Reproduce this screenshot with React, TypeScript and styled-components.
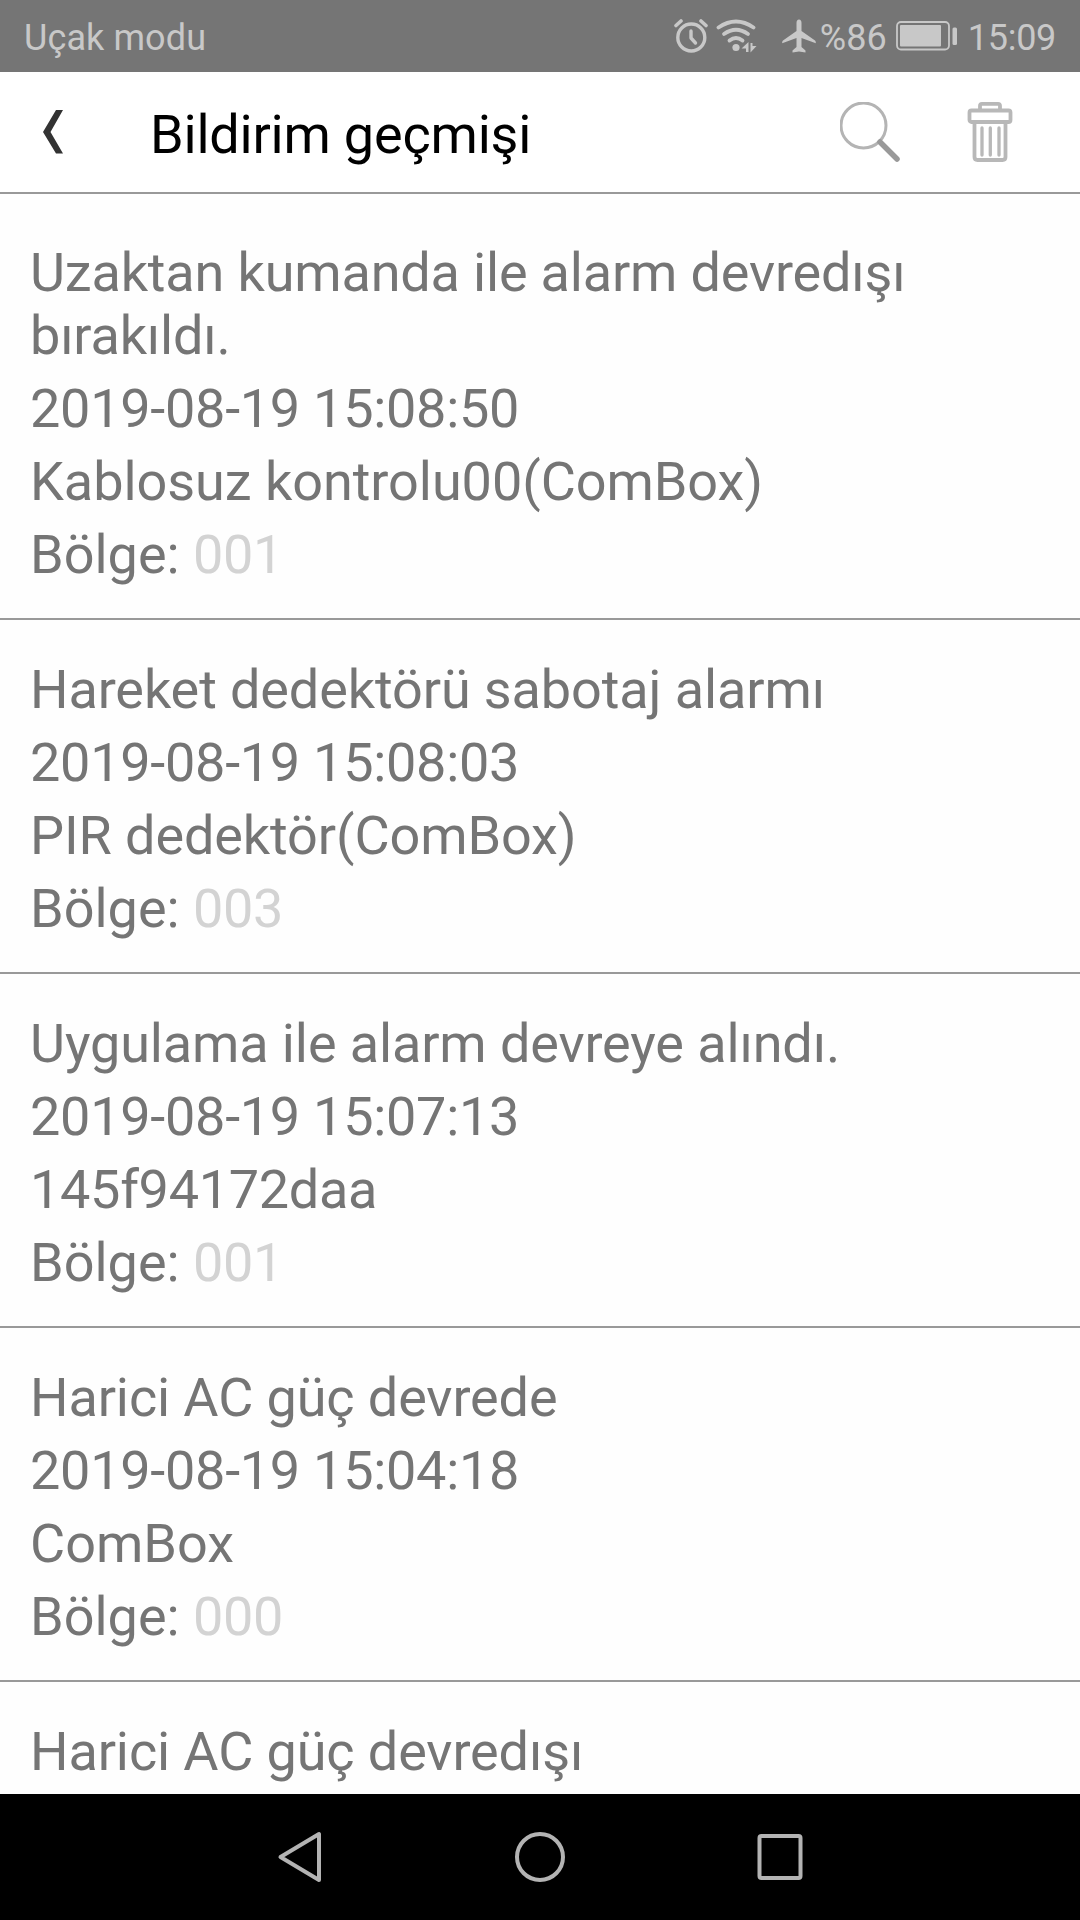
import React from 'react';
import styled, { createGlobalStyle } from 'styled-components';

const GlobalStyle = createGlobalStyle`
  * { box-sizing: border-box; }
  body { margin: 0; background: #fff; font-family: Roboto, "Liberation Sans", sans-serif; }
`;

const Screen = styled.div`
  width: 1080px;
  height: 1920px;
  display: flex;
  flex-direction: column;
  overflow: hidden;
  background: #fefefe;
`;

const StatusBar = styled.div`
  flex: none;
  height: 72px;
  display: flex;
  align-items: center;
  justify-content: space-between;
  padding: 3px 24px 0 24px;
  background: #757575;
  color: #c8c8c8;
  font-size: 36px;
  line-height: 42px;
  white-space: nowrap;
`;

const StatusLabel = styled.span`
  letter-spacing: 0.1px;
`;

const StatusIcons = styled.div`
  display: flex;
  align-items: center;
`;

const StatusGlyph = styled.svg<{ $gap: number }>`
  display: block;
  flex: none;
  margin-right: ${(p) => p.$gap}px;
  margin-top: -3px;
`;

const Percent = styled.span`
  width: 76px;
`;

const Clock = styled.span`
  letter-spacing: -0.3px;
`;

const Header = styled.header`
  flex: none;
  height: 122px;
  display: flex;
  align-items: center;
  padding: 0 67px 0 42px;
  border-bottom: 2px solid #999;
  background: #fff;
`;

const Title = styled.h1`
  flex: 1;
  margin: 5px 0 0 86px;
  font-size: 54px;
  font-weight: 400;
  line-height: 63px;
  letter-spacing: -0.2px;
  color: #000;
`;

const IconButton = styled.button<{ $gap?: number }>`
  display: block;
  padding: 0;
  border: 0;
  background: none;
  margin-right: ${(p) => p.$gap ?? 0}px;
  svg { display: block; }
`;

const List = styled.main`
  flex: 1;
  min-height: 0;
  overflow: hidden;
  padding-top: 9px;
`;

const Item = styled.article`
  display: flex;
  flex-direction: column;
  gap: 10px;
  padding: 38px 30px 32px;
  border-bottom: 2px solid #999;
`;

const Line = styled.div<{ $tracking?: number }>`
  font-size: 54px;
  line-height: 63px;
  letter-spacing: ${(p) => p.$tracking ?? 0}px;
  color: #757575;
`;

const Zone = styled.span`
  letter-spacing: -0.3px;
  color: #d3d3d3;
`;

const NavBar = styled.nav`
  flex: none;
  height: 126px;
  display: flex;
  align-items: center;
  justify-content: center;
  gap: 180px;
  background: #000;
`;

const records = [
  { title: 'Uzaktan kumanda ile alarm devredışı bırakıldı.', titleTracking: -0.17, time: '2019-08-19 15:08:50', source: 'Kablosuz kontrolu00(ComBox)', sourceTracking: -0.05, zone: '001' },
  { title: 'Hareket dedektörü sabotaj alarmı', titleTracking: -0.11, time: '2019-08-19 15:08:03', source: 'PIR dedektör(ComBox)', sourceTracking: -0.1, zone: '003' },
  { title: 'Uygulama ile alarm devreye alındı.', titleTracking: -0.12, time: '2019-08-19 15:07:13', source: '145f94172daa', sourceTracking: -0.3, zone: '001' },
  { title: 'Harici AC güç devrede', titleTracking: -0.11, time: '2019-08-19 15:04:18', source: 'ComBox', sourceTracking: 0, zone: '000' },
  { title: 'Harici AC güç devredışı', titleTracking: -0.11, time: '', source: '', sourceTracking: 0, zone: '' },
];

const AlarmIcon = () => (
  <StatusGlyph $gap={8} width="34" height="36" viewBox="0 0 34 36" fill="none" stroke="#c8c8c8" strokeLinecap="round">
    <circle cx="17.3" cy="19.5" r="13.5" strokeWidth="3.4" />
    <path d="M17 13v7l4.5 5" strokeWidth="3.4" strokeLinejoin="round" />
    <path d="M2 7.5l5-4.5M32 7.5L27 3" strokeWidth="3.6" />
  </StatusGlyph>
);

const WifiIcon = () => (
  <StatusGlyph $gap={25} width="41" height="36" viewBox="0 0 41 36" fill="none" stroke="#c8c8c8" strokeWidth="3.8" strokeLinecap="round">
    <path d="M2.5 9.5Q20 -2.5 37.5 9.5" />
    <path d="M8 16Q20 7.5 32 16" />
    <path d="M13.5 22.500Q20 17.500 26.500 22.500" />
    <circle cx="20" cy="29.5" r="3.6" fill="#c8c8c8" stroke="none" />
    <path d="M32.500 24v10h-2.500v-3.500h-4.500zM34.500 34.500v-9.500h2v3h4z" fill="#c8c8c8" stroke="none" />
  </StatusGlyph>
);

const PlaneIcon = () => (
  <StatusGlyph $gap={4} width="34" height="36" viewBox="0 0 34 36" fill="#c8c8c8">
    <path d="M17 1.500c-1.600 0-2.500 1.500-2.500 3.500v8L1 22.500c-.6.500-.8 1-.8 2.700L14.500 20v9l-4 3.500v2l6.500-1 6.500 1v-2l-4-3.500v-9l14.300 5.200c0-1.700-.2-2.200-.8-2.700L19.500 13V5c0-2-.9-3.500-2.500-3.500z" />
  </StatusGlyph>
);

const BatteryIcon = () => (
  <StatusGlyph $gap={10} width="62" height="30" viewBox="0 0 62 30">
    <rect x="1" y="1" width="52" height="27.500" rx="4" fill="none" stroke="#c8c8c8" strokeWidth="1.800" />
    <rect x="4" y="4" width="41" height="21.500" rx="1" fill="#c8c8c8" />
    <rect x="56.500" y="6.500" width="4.500" height="17.500" rx="1.500" fill="#c8c8c8" />
  </StatusGlyph>
);

export default function App() {
  return (
    <>
      <GlobalStyle />
      <Screen>
        <StatusBar>
          <StatusLabel>Uçak modu</StatusLabel>
          <StatusIcons>
            <AlarmIcon />
            <WifiIcon />
            <PlaneIcon />
            <Percent>%86</Percent>
            <BatteryIcon />
            <Clock>15:09</Clock>
          </StatusIcons>
        </StatusBar>
        <Header>
          <IconButton aria-label="Geri">
            <svg width="22" height="44" viewBox="0 0 22 44" fill="#333">
              <path d="M14 0h7L8.500 22 21 43.500h-7L1 22z" />
            </svg>
          </IconButton>
          <Title>Bildirim geçmişi</Title>
          <IconButton $gap={66} aria-label="Ara">
            <svg width="61" height="60" viewBox="0 0 61 60" fill="none">
              <circle cx="23.500" cy="23.500" r="22.500" stroke="#b4b4b4" strokeWidth="3" />
              <path d="M40 40l17 17" stroke="#999" strokeWidth="5.500" strokeLinecap="round" />
            </svg>
          </IconButton>
          <IconButton aria-label="Sil">
            <svg width="46" height="60" viewBox="0 0 46 60" fill="none" stroke="#b8b8b8" strokeWidth="3.800">
              <path d="M13 8V3.800Q13 1.900 15 1.900h16q2 0 2 1.900V8" />
              <rect x="2.500" y="8.500" width="41" height="11.500" rx="2" />
              <path d="M7.500 20v35q0 3 3 3h25q3 0 3-3V20" />
              <path d="M15 26v27M23.300 26v27M32 26v27" strokeWidth="3.300" strokeLinecap="round" />
            </svg>
          </IconButton>
        </Header>
        <List>
          {records.map((r) => (
            <Item key={r.title}>
              <Line $tracking={r.titleTracking}>{r.title}</Line>
              {r.time && <Line $tracking={-0.27}>{r.time}</Line>}
              {r.source && <Line $tracking={r.sourceTracking}>{r.source}</Line>}
              {r.zone && (
                <Line>
                  Bölge: <Zone>{r.zone}</Zone>
                </Line>
              )}
            </Item>
          ))}
        </List>
        <NavBar>
          <IconButton aria-label="Geri">
            <svg width="60" height="60" viewBox="0 0 60 60" fill="none" stroke="#b3b3b3" strokeWidth="4" strokeLinejoin="round">
              <path d="M49 7v46L10.500 30z" />
            </svg>
          </IconButton>
          <IconButton aria-label="Ana ekran">
            <svg width="60" height="60" viewBox="0 0 60 60" fill="none" stroke="#b3b3b3" strokeWidth="4">
              <circle cx="30" cy="30" r="23" />
            </svg>
          </IconButton>
          <IconButton aria-label="Son uygulamalar">
            <svg width="60" height="60" viewBox="0 0 60 60" fill="none" stroke="#b3b3b3" strokeWidth="4">
              <rect x="9.500" y="9" width="41" height="42" rx="2" />
            </svg>
          </IconButton>
        </NavBar>
      </Screen>
    </>
  );
}
